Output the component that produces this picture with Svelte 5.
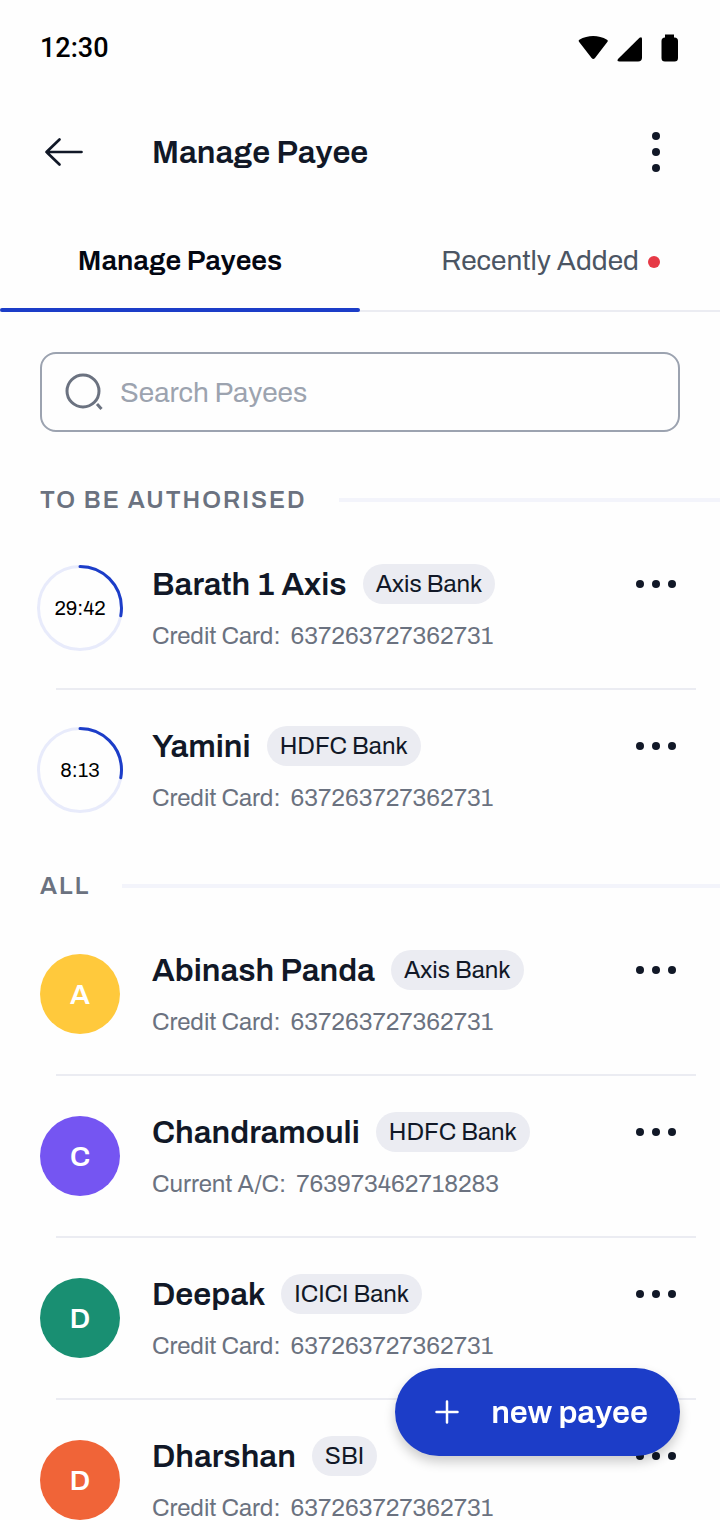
<script>
  let tab = "manage";
  let query = "";

  const pending = [
    { name: "Barath 1 Axis", bank: "Axis Bank", type: "Credit Card", number: "637263727362731", timer: "29:42", progress: 28 },
    { name: "Yamini", bank: "HDFC Bank", type: "Credit Card", number: "637263727362731", timer: "8:13", progress: 28 },
  ];

  const all = [
    { name: "Abinash Panda", bank: "Axis Bank", type: "Credit Card", number: "637263727362731", color: "#ffc93c" },
    { name: "Chandramouli", bank: "HDFC Bank", type: "Current A/C", number: "763973462718283", color: "#7555f2" },
    { name: "Deepak", bank: "ICICI Bank", type: "Credit Card", number: "637263727362731", color: "#198f72" },
    { name: "Dharshan", bank: "SBI", type: "Credit Card", number: "637263727362731", color: "#f06438" },
  ];

  const matches = (list, q) =>
    list.filter((p) => p.name.toLowerCase().includes(q.toLowerCase()));

  $: sections = [
    { title: "To be authorised", payees: matches(pending, query) },
    { title: "All", payees: matches(all, query) },
  ];
</script>

<div class="app">
  <div class="status">
    <span class="clock">12:30</span>
    <svg width="104" height="32" viewBox="0 0 104 32">
      <path d="M3 9.8Q2 8.500 3.300 7.700C12 2.700 22.500 2.700 31 7.700Q32.500 8.500 31.500 9.800L19 26Q17.300 27.800 15.600 26Z" />
      <path d="M63.500 5.800Q66 4 66 7V25.500Q66 29.500 62 29.500H43.500Q40.500 29.500 42 27Z" />
      <path d="M89 2.500H98V5.500H98.500Q102 5.500 102 9V26Q102 29.500 98.500 29.500H89Q85.500 29.500 85.500 26V9Q85.500 5.500 89 5.500Z" />
    </svg>
  </div>

  <header>
    <button class="icon" aria-label="Back">
      <svg width="48" height="48" viewBox="0 0 48 48">
        <path class="arrow" d="M41.500 24H6.500M19.500 11.500L6.500 24L19.500 36.500" />
      </svg>
    </button>
    <h1>Manage Payee</h1>
    <button class="icon" aria-label="More options">
      <svg width="48" height="48" viewBox="0 0 48 48">
        <circle cx="24" cy="8" r="4" />
        <circle cx="24" cy="24" r="4" />
        <circle cx="24" cy="40" r="4" />
      </svg>
    </button>
  </header>

  <nav>
    <button class="tab" class:active={tab == "manage"} on:click={() => (tab = "manage")}>
      Manage Payees
    </button>
    <button class="tab" class:active={tab == "recent"} on:click={() => (tab = "recent")}>
      <span class="badged">Recently Added<i class="badge"></i></span>
    </button>
  </nav>

  <main>
    <label class="search">
      <svg width="48" height="48" viewBox="0 0 48 48">
        <circle cx="25" cy="23" r="16" />
        <path d="M39 36L43.500 41" />
      </svg>
      <input type="text" placeholder="Search Payees" aria-label="Search Payees" bind:value={query} />
    </label>

    {#each sections as section}
      <section>
        <h2>{section.title}</h2>
        <ul>
          {#each section.payees as payee}
            <li>
              <div class="row">
                {#if payee.timer}
                  <div class="timer">
                    <svg width="88" height="88" viewBox="0 0 88 88">
                      <circle class="track" cx="44" cy="44" r="41.5" />
                      <circle
                        class="progress"
                        cx="44"
                        cy="44"
                        r="41.5"
                        pathLength="100"
                        stroke-dasharray="{payee.progress} 100"
                        transform="rotate(-90 44 44)"
                      />
                    </svg>
                    <span>{payee.timer}</span>
                  </div>
                {:else}
                  <div class="avatar" style="background-color: {payee.color}">{payee.name[0]}</div>
                {/if}
                <div class="info">
                  <div class="line">
                    <h3>{payee.name}</h3>
                    <span class="bank">{payee.bank}</span>
                    <button class="more" aria-label="Options for {payee.name}">
                      <svg width="48" height="40" viewBox="0 0 48 40">
                        <circle cx="8" cy="20" r="4" />
                        <circle cx="24" cy="20" r="4" />
                        <circle cx="40" cy="20" r="4" />
                      </svg>
                    </button>
                  </div>
                  <p><span>{payee.type}:</span><span>{payee.number}</span></p>
                </div>
              </div>
            </li>
          {/each}
        </ul>
      </section>
    {/each}
  </main>

  <button class="fab">
    <svg width="40" height="40" viewBox="0 0 40 40">
      <path d="M20 9.500V30.500M9.500 20H30.500" />
    </svg>
    new payee
  </button>
</div>

<style>
  :global(body) {
    background: #fefefe;
  }
  .app {
    display: flex;
    flex-direction: column;
    height: 100vh;
    overflow: hidden;
    font-family: Archivo, "Liberation Sans", Arial, sans-serif;
    color: #111827;
  }
  h1,
  h2,
  h3,
  p,
  ul {
    margin: 0;
    padding: 0;
  }
  ul {
    list-style: none;
  }
  svg {
    display: block;
    flex: none;
  }
  button {
    font: inherit;
    color: inherit;
    background: none;
    border: none;
    padding: 0;
    cursor: pointer;
  }
  button svg {
    fill: #111827;
  }

  .status {
    flex: none;
    display: flex;
    align-items: center;
    justify-content: space-between;
    height: 96px;
    padding: 0 40px;
    color: #000;
  }
  .clock {
    font-family: "Google Sans", Roboto, sans-serif;
    font-size: 27px;
    font-weight: 500;
  }

  header {
    flex: none;
    display: flex;
    align-items: center;
    height: 112px;
    padding: 0 40px;
  }
  h1 {
    flex: 1;
    margin-left: 64px;
    font-size: 32px;
    font-weight: 600;
  }
  .arrow {
    fill: none;
    stroke: #111827;
    stroke-width: 2.7;
    stroke-linecap: round;
    stroke-linejoin: round;
  }

  nav {
    flex: none;
    display: flex;
    height: 104px;
    box-shadow: inset 0 -2px #ebecf2;
  }
  .tab {
    position: relative;
    flex: 1;
    font-size: 28px;
    color: #4b5563;
  }
  .tab.active {
    font-weight: 600;
    color: #030712;
  }
  .tab.active::after {
    content: "";
    position: absolute;
    left: 0;
    right: 0;
    bottom: 0;
    height: 4px;
    border-radius: 2px;
    background: #1c3dc8;
  }
  .badged {
    position: relative;
  }
  .badge {
    position: absolute;
    left: 100%;
    top: 50%;
    width: 12px;
    height: 12px;
    margin: -4px 0 0 9px;
    border-radius: 50%;
    background: #e63946;
  }

  main {
    flex: 1;
    min-height: 0;
    overflow-y: auto;
    scrollbar-width: none;
  }
  .search {
    display: flex;
    align-items: center;
    gap: 14px;
    box-sizing: border-box;
    height: 80px;
    margin: 40px;
    padding: 0 16px;
    border: 2px solid #9ca3b0;
    border-radius: 16px;
  }
  .search svg {
    fill: none;
    stroke: #6b7280;
    stroke-width: 3;
  }
  .search input {
    flex: 1;
    min-width: 0;
    padding: 0;
    border: none;
    outline: none;
    background: none;
    font: inherit;
    font-size: 28px;
    color: #111827;
  }
  .search input::placeholder {
    color: #9ca3af;
    opacity: 1;
  }

  section + section {
    margin-top: 8px;
  }
  h2 {
    display: flex;
    align-items: center;
    gap: 32px;
    height: 56px;
    padding-left: 40px;
    font-size: 24px;
    font-weight: 600;
    letter-spacing: 2px;
    text-transform: uppercase;
    color: #6b7280;
  }
  h2::after {
    content: "";
    flex: 1;
    height: 4px;
    background: #f3f4fb;
  }
  li + li::before {
    content: "";
    display: block;
    height: 2px;
    margin: 0 24px 0 56px;
    background: #ebecf2;
  }
  .row {
    display: flex;
    align-items: center;
    gap: 32px;
    padding: 36px 40px;
  }
  .avatar,
  .timer {
    flex: none;
    display: grid;
    place-items: center;
    width: 80px;
    height: 80px;
    border-radius: 50%;
  }
  .avatar {
    font-size: 28px;
    font-weight: 600;
    color: #fff;
  }
  .timer {
    position: relative;
    font-size: 20px;
    color: #000;
  }
  .timer svg {
    position: absolute;
    inset: -4px;
    fill: none;
    stroke-width: 3;
  }
  .track {
    stroke: #e8ebfb;
  }
  .progress {
    stroke: #1c3dc8;
    stroke-linecap: round;
  }
  .info {
    flex: 1;
    min-width: 0;
  }
  .line {
    display: flex;
    align-items: center;
    height: 40px;
    margin-bottom: 16px;
  }
  h3 {
    font-size: 32px;
    font-weight: 600;
    white-space: nowrap;
  }
  .bank {
    margin-left: 16px;
    padding: 0 13px;
    border-radius: 20px;
    background: #ebecf2;
    font-size: 24px;
    line-height: 40px;
    white-space: nowrap;
  }
  .more {
    margin-left: auto;
  }
  p {
    display: flex;
    gap: 10px;
    font-size: 24px;
    line-height: 32px;
    color: #6b7280;
  }

  .fab {
    position: fixed;
    right: 40px;
    bottom: 64px;
    display: flex;
    align-items: center;
    gap: 24px;
    height: 88px;
    padding: 0 32px;
    border-radius: 44px;
    background: #1c3dc8;
    box-shadow: 0 6px 12px rgba(0, 0, 0, 0.2);
    font-size: 32px;
    font-weight: 600;
    color: #fff;
  }
  .fab svg {
    fill: none;
    stroke: #fff;
    stroke-width: 2.5;
    stroke-linecap: round;
  }
</style>
